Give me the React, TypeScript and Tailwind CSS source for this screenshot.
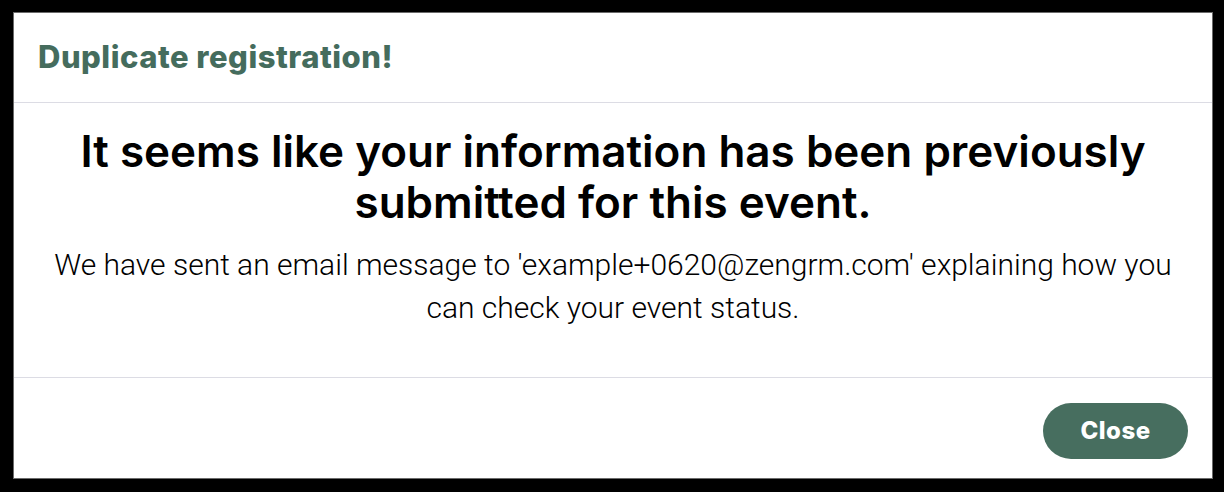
export default function App() {
  return (
    <div className="min-h-screen bg-black pt-[12px] pl-[13px]">
      <div className="w-[1200px] h-[467px] bg-white border border-[#6b6b6b] flex flex-col">
        {/* Header */}
        <div className="h-[90px] flex items-center px-[24px] border-b border-[#dcdce4]">
          <h2 className="text-[31px] font-extrabold text-[#456c5d] tracking-[0.5px] font-['Inter',sans-serif]">
            Duplicate registration!
          </h2>
        </div>

        {/* Body */}
        <div className="flex-1 flex flex-col items-center pt-[23px] px-[20px] text-center">
          <h1 className="text-[44px] leading-[51px] font-semibold text-black font-['Inter',sans-serif]">
            It seems like your information has been previously
            <br />
            submitted for this event.
          </h1>
          <p className="mt-[15px] text-[30px] leading-[43px] font-light text-black font-['Roboto',sans-serif]">
            We have sent an email message to 'example+0620@zengrm.com' explaining how you
            <br />
            can check your event status.
          </p>
        </div>

        {/* Footer */}
        <div className="h-[101px] flex items-center justify-end pt-[6px] px-[24px] border-t border-[#dcdce4]">
          <button className="w-[145px] h-[56px] rounded-full bg-[#476e5f] text-white text-[24px] tracking-[0.5px] font-extrabold font-['Inter',sans-serif]">
            Close
          </button>
        </div>
      </div>
    </div>
  )
}
